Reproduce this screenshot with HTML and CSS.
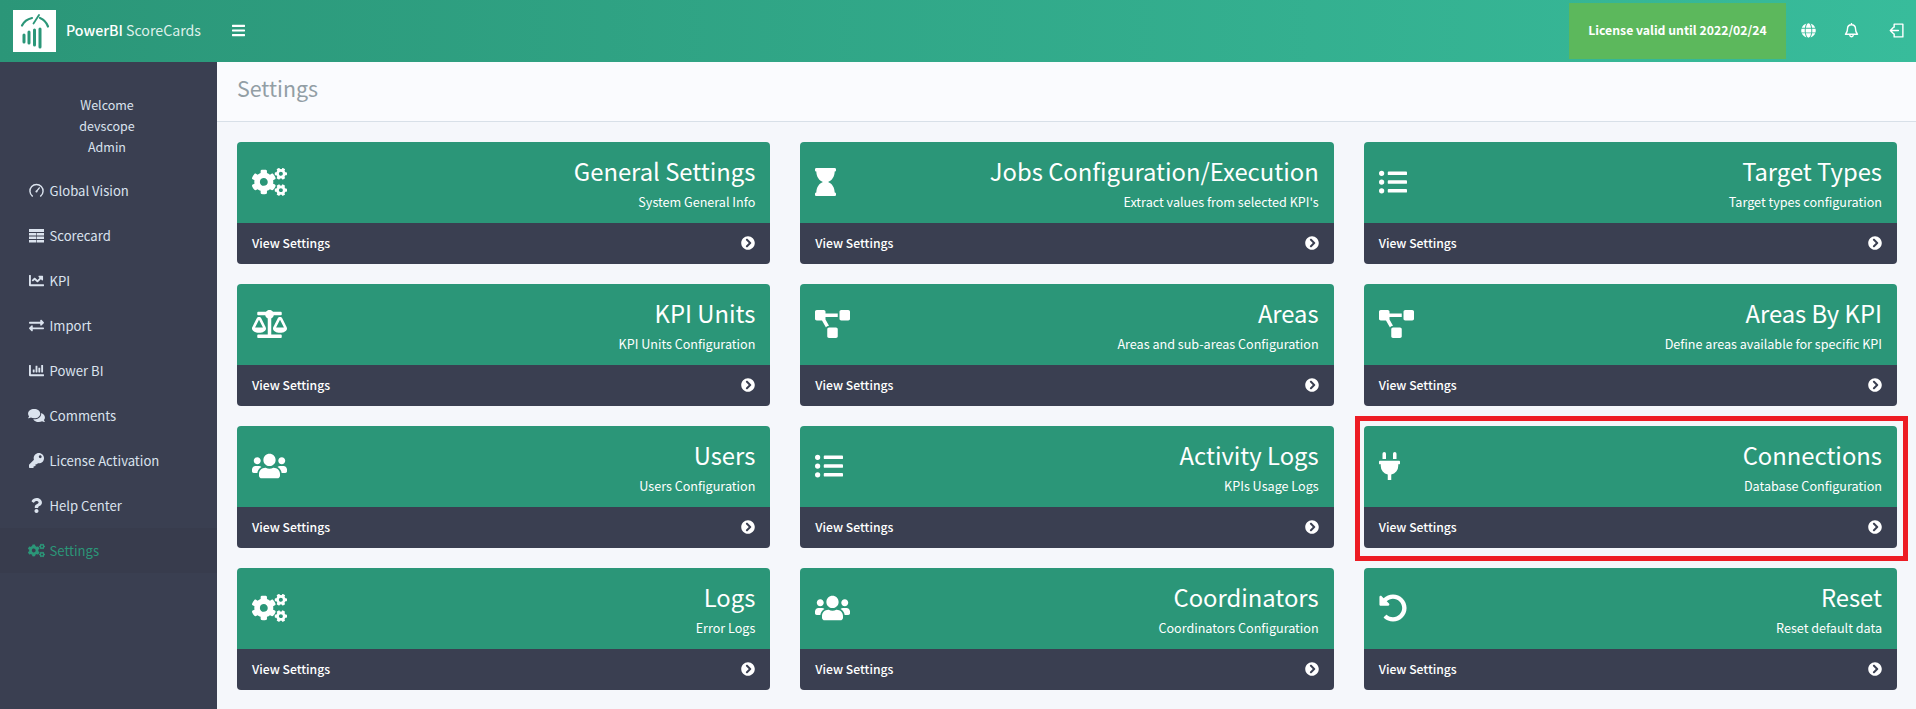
FILE: index.html
```html
<!DOCTYPE html>
<html lang="en">
<head>
<meta charset="utf-8">
<title>Settings - PowerBI ScoreCards</title>
<link rel="stylesheet" href="styles.css">
</head>
<body>
<svg class="defs" width="0" height="0" aria-hidden="true">
<defs>
<symbol id="i-cogs" viewBox="0 0 640 512"><path d="M512.1 191l-8.2 14.3c-3 5.3-9.4 7.5-15.1 5.4-11.8-4.4-22.6-10.7-32.1-18.6-4.6-3.8-5.8-10.5-2.8-15.7l8.2-14.3c-6.9-8-12.3-17.3-15.9-27.4h-16.5c-6 0-11.2-4.3-12.2-10.3-2-12-2.1-24.6 0-37.1 1-6 6.2-10.4 12.2-10.4h16.5c3.6-10.1 9-19.4 15.9-27.4l-8.2-14.3c-3-5.2-1.9-11.9 2.8-15.7 9.5-7.9 20.4-14.2 32.1-18.6 5.7-2.1 12.1.1 15.1 5.4l8.2 14.3c10.5-1.9 21.2-1.9 31.7 0L552 6.3c3-5.3 9.4-7.5 15.1-5.4 11.8 4.4 22.6 10.7 32.1 18.6 4.6 3.8 5.8 10.5 2.8 15.7l-8.2 14.3c6.9 8 12.3 17.3 15.9 27.4h16.5c6 0 11.2 4.3 12.2 10.3 2 12 2.1 24.6 0 37.1-1 6-6.2 10.4-12.2 10.4h-16.5c-3.6 10.1-9 19.4-15.9 27.4l8.2 14.3c3 5.2 1.9 11.9-2.8 15.7-9.5 7.9-20.4 14.2-32.1 18.6-5.7 2.1-12.1-.1-15.1-5.4l-8.2-14.3c-10.4 1.9-21.2 1.9-31.7 0zm-10.5-58.8c38.5 29.6 82.4-14.3 52.8-52.8-38.5-29.7-82.4 14.3-52.8 52.8zM386.3 286.1l33.7 16.8c10.1 5.8 14.5 18.1 10.5 29.1-8.9 24.2-26.4 46.4-42.6 65.8-7.4 8.9-20.2 11.1-30.3 5.3l-29.1-16.8c-16 13.7-34.6 24.6-54.9 31.7v33.6c0 11.6-8.3 21.6-19.7 23.6-24.6 4.2-50.4 4.4-75.9 0-11.5-2-20-11.9-20-23.6V418c-20.3-7.2-38.9-18-54.9-31.7L74 403c-10 5.8-22.9 3.6-30.3-5.3-16.2-19.4-33.3-41.6-42.2-65.7-4-10.9.4-23.2 10.5-29.1l33.3-16.8c-3.9-20.9-3.9-42.4 0-63.4L12 205.8c-10.1-5.8-14.6-18.1-10.5-29 8.9-24.2 26-46.4 42.2-65.8 7.4-8.9 20.2-11.1 30.3-5.3l29.1 16.8c16-13.7 34.6-24.6 54.9-31.7V57.1c0-11.5 8.2-21.5 19.6-23.5 24.6-4.2 50.5-4.4 76-.1 11.5 2 20 11.9 20 23.6v33.6c20.3 7.2 38.9 18 54.9 31.7l29.1-16.8c10-5.8 22.9-3.6 30.3 5.3 16.2 19.4 33.2 41.6 42.1 65.8 4 10.9.1 23.2-10 29.1l-33.7 16.8c3.9 21 3.9 42.5 0 63.5zm-117.6 21.1c59.2-77-28.7-164.9-105.7-105.7-59.2 77 28.7 164.9 105.7 105.7zm243.4 182.7l-8.2 14.3c-3 5.3-9.4 7.5-15.1 5.4-11.8-4.4-22.6-10.7-32.1-18.6-4.6-3.8-5.8-10.5-2.8-15.7l8.2-14.3c-6.9-8-12.3-17.3-15.9-27.4h-16.5c-6 0-11.2-4.3-12.2-10.3-2-12-2.1-24.6 0-37.1 1-6 6.2-10.4 12.2-10.4h16.5c3.6-10.1 9-19.4 15.9-27.4l-8.2-14.3c-3-5.2-1.9-11.9 2.8-15.7 9.5-7.9 20.4-14.2 32.1-18.6 5.7-2.1 12.1.1 15.1 5.4l8.2 14.3c10.5-1.9 21.2-1.9 31.7 0l8.2-14.3c3-5.3 9.4-7.5 15.1-5.4 11.8 4.4 22.6 10.7 32.1 18.6 4.6 3.8 5.8 10.5 2.8 15.7l-8.2 14.3c6.9 8 12.3 17.3 15.9 27.4h16.5c6 0 11.2 4.3 12.2 10.3 2 12 2.1 24.6 0 37.1-1 6-6.2 10.4-12.2 10.4h-16.5c-3.6 10.1-9 19.4-15.9 27.4l8.2 14.3c3 5.2 1.9 11.9-2.8 15.7-9.5 7.9-20.4 14.2-32.1 18.6-5.7 2.1-12.1-.1-15.1-5.4l-8.2-14.3c-10.4 1.9-21.2 1.9-31.7 0zM501.6 431c38.5 29.6 82.4-14.3 52.8-52.8-38.5-29.6-82.4 14.3-52.8 52.8z"/></symbol>
<symbol id="i-hourglass" viewBox="0 0 384 512"><path d="M360 64c13.255 0 24-10.745 24-24V24c0-13.255-10.745-24-24-24H24C10.745 0 0 10.745 0 24v16c0 13.255 10.745 24 24 24 0 90.965 51.016 167.734 120.842 192C75.016 280.266 24 357.035 24 448c-13.255 0-24 10.745-24 24v16c0 13.255 10.745 24 24 24h336c13.255 0 24-10.745 24-24v-16c0-13.255-10.745-24-24-24 0-90.965-51.016-167.734-120.842-192C308.984 231.734 360 154.965 360 64z"/></symbol>
<symbol id="i-list" viewBox="0 0 512 512"><path d="M48 48a48 48 0 1 0 48 48 48 48 0 0 0-48-48zm0 160a48 48 0 1 0 48 48 48 48 0 0 0-48-48zm0 160a48 48 0 1 0 48 48 48 48 0 0 0-48-48zm448 16H176a16 16 0 0 0-16 16v32a16 16 0 0 0 16 16h320a16 16 0 0 0 16-16v-32a16 16 0 0 0-16-16zm0-320H176a16 16 0 0 0-16 16v32a16 16 0 0 0 16 16h320a16 16 0 0 0 16-16V80a16 16 0 0 0-16-16zm0 160H176a16 16 0 0 0-16 16v32a16 16 0 0 0 16 16h320a16 16 0 0 0 16-16v-32a16 16 0 0 0-16-16z"/></symbol>
<symbol id="i-scale" viewBox="0 0 640 512"><path d="M256 336h-.02c0-16.18 1.34-8.73-85.05-181.51-17.65-35.29-68.19-35.36-85.87 0C-2.06 328.75.02 320.33.02 336H0c0 44.18 57.31 80 128 80s128-35.82 128-80zM128 176l72 144H56l72-144zm511.98 160c0-16.18 1.34-8.73-85.05-181.51-17.65-35.29-68.19-35.36-85.87 0-87.12 174.26-85.04 165.84-85.04 181.51H384c0 44.18 57.31 80 128 80s128-35.82 128-80h-.02zM440 320l72-144 72 144H440zm88 128H352V153.25c23.51-10.29 41.16-31.48 46.39-57.25H528c8.84 0 16-7.16 16-16V48c0-8.84-7.16-16-16-16H383.64C369.04 12.68 346.09 0 320 0s-49.04 12.68-63.64 32H112c-8.84 0-16 7.16-16 16v32c0 8.84 7.16 16 16 16h129.61c5.23 25.76 22.87 46.96 46.39 57.25V448H112c-8.84 0-16 7.16-16 16v32c0 8.84 7.16 16 16 16h416c8.84 0 16-7.16 16-16v-32c0-8.84-7.16-16-16-16z"/></symbol>
<symbol id="i-diagram" viewBox="0 0 640 512"><path d="M384 320H256c-17.67 0-32 14.33-32 32v128c0 17.67 14.33 32 32 32h128c17.67 0 32-14.33 32-32V352c0-17.67-14.33-32-32-32zM192 32c0-17.67-14.33-32-32-32H32C14.33 0 0 14.33 0 32v128c0 17.67 14.33 32 32 32h95.72l73.16 128.04C211.98 300.98 232.4 288 256 288h.28L192 175.51V128h224V64H192V32zM608 0H480c-17.67 0-32 14.33-32 32v128c0 17.67 14.33 32 32 32h128c17.67 0 32-14.33 32-32V32c0-17.67-14.33-32-32-32z"/></symbol>
<symbol id="i-users" viewBox="0 0 640 512"><path d="M96 224c35.3 0 64-28.7 64-64s-28.7-64-64-64-64 28.7-64 64 28.7 64 64 64zm448 0c35.3 0 64-28.7 64-64s-28.7-64-64-64-64 28.7-64 64 28.7 64 64 64zm32 32h-64c-17.6 0-33.5 7.1-45.1 18.6 40.3 22.1 68.9 62 75.1 109.4h66c17.7 0 32-14.3 32-32v-32c0-35.3-28.7-64-64-64zm-256 0c61.9 0 112-50.1 112-112S381.9 32 320 32 208 82.1 208 144s50.1 112 112 112zm76.8 32h-8.3c-20.8 10-43.9 16-68.5 16s-47.6-6-68.5-16h-8.3C179.6 288 128 339.6 128 403.2V432c0 26.5 21.5 48 48 48h288c26.5 0 48-21.5 48-48v-28.8c0-63.6-51.6-115.2-115.2-115.2zm-223.7-13.4C161.5 263.1 145.6 256 128 256H64c-35.3 0-64 28.7-64 64v32c0 17.7 14.3 32 32 32h65.9c6.3-47.4 34.9-87.3 75.2-109.4z"/></symbol>
<symbol id="i-plug" viewBox="0 0 384 512"><path d="M320,32a32,32,0,0,0-64,0v96h64Zm48,128H16A16,16,0,0,0,0,176v32a16,16,0,0,0,16,16H32v32A160.07,160.07,0,0,0,160,412.8V512h64V412.8A160.07,160.07,0,0,0,352,256V224h16a16,16,0,0,0,16-16V176A16,16,0,0,0,368,160ZM128,32a32,32,0,0,0-64,0v96h64Z"/></symbol>
<symbol id="i-undo" viewBox="0 0 512 512"><path d="M255.545 8c-66.269.119-126.438 26.233-170.86 68.685L48.971 40.971C33.851 25.851 8 36.559 8 57.941V192c0 13.255 10.745 24 24 24h134.059c21.382 0 32.09-25.851 16.971-40.971l-41.75-41.75c30.864-28.899 70.801-44.907 113.23-45.273 92.398-.798 170.283 73.977 169.484 169.442C423.236 348.009 349.816 424 256 424c-41.127 0-79.997-14.678-110.63-41.556-4.743-4.161-11.906-3.908-16.368.553L89.34 422.659c-4.872 4.872-4.631 12.815.482 17.433C133.798 479.813 192.074 504 256 504c136.966 0 247.999-111.033 248-247.998C504.001 119.193 392.354 7.755 255.545 8z"/></symbol>
<symbol id="i-chevron" viewBox="0 0 512 512"><path d="M256 8c137 0 248 111 248 248S393 504 256 504 8 393 8 256 119 8 256 8zm113.9 231L234.4 103.5c-9.4-9.4-24.6-9.4-33.9 0l-17 17c-9.4 9.4-9.4 24.6 0 33.9L285.1 256 183.5 357.6c-9.4 9.4-9.4 24.6 0 33.9l17 17c9.4 9.4 24.6 9.4 33.9 0L369.9 273c9.4-9.4 9.4-24.6 0-34z"/></symbol>
<symbol id="i-bars" viewBox="0 0 448 512"><path d="M16 132h416c8.837 0 16-7.163 16-16V76c0-8.837-7.163-16-16-16H16C7.163 60 0 67.163 0 76v40c0 8.837 7.163 16 16 16zm0 160h416c8.837 0 16-7.163 16-16v-40c0-8.837-7.163-16-16-16H16c-8.837 0-16 7.163-16 16v40c0 8.837 7.163 16 16 16zm0 160h416c8.837 0 16-7.163 16-16v-40c0-8.837-7.163-16-16-16H16c-8.837 0-16 7.163-16 16v40c0 8.837 7.163 16 16 16z"/></symbol>
<symbol id="i-table" viewBox="0 0 15 15"><path d="M0 1h15v3H0zM0 5h7.200v2.600H0zM7.800 5H15v2.600H7.800zM0 8.500h7.200v2.500H0zM7.800 8.500H15v2.500H7.800zM0 12h7.200v2.500H0zM7.800 12H15v2.500H7.800z"/></symbol>
<symbol id="i-line" viewBox="0 0 512 512"><path d="M496 384H64V80c0-8.84-7.16-16-16-16H16C7.16 64 0 71.16 0 80v336c0 17.67 14.33 32 32 32h464c8.84 0 16-7.16 16-16v-32c0-8.84-7.16-16-16-16zM464 96H345.94c-21.38 0-32.09 25.85-16.97 40.97l32.4 32.4L288 242.75l-73.37-73.37c-12.5-12.5-32.76-12.5-45.25 0l-68.69 68.69c-6.25 6.25-6.25 16.38 0 22.63l22.62 22.62c6.25 6.25 16.38 6.25 22.63 0L192 237.25l73.37 73.37c12.5 12.5 32.76 12.5 45.25 0l96-96 32.4 32.4c15.12 15.12 40.97 4.41 40.97-16.97V112c.01-8.84-7.15-16-15.99-16z"/></symbol>
<symbol id="i-exchange" viewBox="0 0 512 512"><path d="M0 168v-16c0-13.255 10.745-24 24-24h360V80c0-21.367 25.899-32.042 40.971-16.971l80 80c9.372 9.373 9.372 24.569 0 33.941l-80 80C409.956 271.982 384 261.456 384 240v-48H24c-13.255 0-24-10.745-24-24zm488 152H128v-48c0-21.314-25.862-32.08-40.971-16.971l-80 80c-9.372 9.373-9.372 24.569 0 33.941l80 80C102.057 463.997 128 453.437 128 432v-48h360c13.255 0 24-10.745 24-24v-16c0-13.255-10.745-24-24-24z"/></symbol>
<symbol id="i-bar" viewBox="0 0 512 512"><path d="M332.8 320h38.4c6.4 0 12.8-6.4 12.8-12.8V172.8c0-6.4-6.4-12.8-12.8-12.8h-38.4c-6.4 0-12.8 6.4-12.8 12.8v134.4c0 6.4 6.4 12.8 12.8 12.8zm96 0h38.4c6.4 0 12.8-6.4 12.8-12.8V76.8c0-6.4-6.4-12.8-12.8-12.8h-38.4c-6.4 0-12.8 6.4-12.8 12.8v230.4c0 6.4 6.4 12.8 12.8 12.8zm-288 0h38.4c6.4 0 12.8-6.4 12.8-12.8v-70.4c0-6.4-6.4-12.8-12.8-12.8h-38.4c-6.4 0-12.8 6.4-12.8 12.8v70.4c0 6.4 6.4 12.8 12.8 12.8zm96 0h38.4c6.4 0 12.8-6.4 12.8-12.8V108.8c0-6.4-6.4-12.8-12.8-12.8h-38.4c-6.4 0-12.8 6.4-12.8 12.8v198.4c0 6.4 6.4 12.8 12.8 12.8zM496 384H64V80c0-8.84-7.16-16-16-16H16C7.16 64 0 71.16 0 80v336c0 17.67 14.33 32 32 32h464c8.84 0 16-7.16 16-16v-32c0-8.84-7.16-16-16-16z"/></symbol>
<symbol id="i-comments" viewBox="0 0 576 512"><path d="M416 192c0-88.4-93.1-160-208-160S0 103.6 0 192c0 34.3 14.1 65.9 38 92-13.4 30.2-35.5 54.2-35.8 54.5-2.2 2.3-2.8 5.7-1.5 8.7S4.8 352 8 352c36.6 0 66.9-12.3 88.7-25 32.2 15.7 70.3 25 111.3 25 114.9 0 208-71.6 208-160zm122 220c23.9-26 38-57.7 38-92 0-66.9-53.5-124.2-129.3-148.1.9 6.6 1.3 13.3 1.3 20.1 0 105.9-107.7 192-240 192-10.8 0-21.3-.8-31.7-1.9C207.8 439.6 281.8 480 368 480c41 0 79.1-9.2 111.3-25 21.8 12.7 52.1 25 88.7 25 3.2 0 6.1-1.9 7.3-4.8 1.3-2.9.7-6.3-1.5-8.7-.3-.3-22.4-24.2-35.8-54.5z"/></symbol>
<symbol id="i-key" viewBox="0 0 512 512"><path d="M512 176.001C512 273.203 433.202 352 336 352c-11.22 0-22.19-1.062-32.827-3.069l-24.012 27.014A23.999 23.999 0 0 1 261.223 384H224v40c0 13.255-10.745 24-24 24h-40v40c0 13.255-10.745 24-24 24H24c-13.255 0-24-10.745-24-24v-78.059c0-6.365 2.529-12.47 7.029-16.971l161.802-161.802C163.108 213.814 160 195.271 160 176 160 78.798 238.797.001 335.999 0 433.488-.001 512 78.511 512 176.001zM336 128c0 26.51 21.49 48 48 48s48-21.49 48-48-21.49-48-48-48-48 21.49-48 48z"/></symbol>
<symbol id="i-question" viewBox="0 0 384 512"><path d="M202.021 0C122.202 0 70.503 32.703 29.914 91.026c-7.363 10.58-5.093 25.086 5.178 32.874l43.138 32.709c10.373 7.865 25.132 6.026 33.253-4.148 25.049-31.381 43.63-49.449 82.757-49.449 30.764 0 68.816 19.799 68.816 49.631 0 22.552-18.617 34.134-48.993 51.164-35.423 19.86-82.299 44.576-82.299 106.405V320c0 13.255 10.745 24 24 24h72.471c13.255 0 24-10.745 24-24v-5.773c0-42.86 125.268-44.645 125.268-160.627C377.504 66.256 286.902 0 202.021 0zM192 373.459c-38.196 0-69.271 31.075-69.271 69.271 0 38.195 31.075 69.27 69.271 69.27s69.271-31.075 69.271-69.271-31.075-69.27-69.271-69.27z"/></symbol>
<symbol id="i-globe" viewBox="0 0 496 512"><path d="M336.5 160C322 70.7 287.8 8 248 8s-74 62.7-88.5 152h177zM152 256c0 22.2 1.2 43.5 3.3 64h185.3c2.1-20.5 3.3-41.8 3.3-64s-1.2-43.5-3.3-64H155.3c-2.1 20.5-3.3 41.8-3.3 64zm324.7-96c-28.6-67.9-86.5-120.4-158-141.6 24.4 33.8 41.2 84.7 50 141.6h108zM177.2 18.4C105.8 39.6 47.8 92.1 19.3 160h108c8.7-56.9 25.5-107.8 49.9-141.6zM487.4 192H372.7c2.1 21 3.3 42.5 3.3 64s-1.2 43-3.3 64h114.6c5.5-20.5 8.6-41.8 8.6-64s-3.1-43.5-8.5-64zM120 256c0-21.5 1.2-43 3.3-64H8.6C3.2 212.5 0 233.8 0 256s3.2 43.5 8.6 64h114.6c-2-21-3.2-42.5-3.2-64zm39.5 96c14.5 89.3 48.7 152 88.5 152s74-62.7 88.5-152h-177zm159.3 141.6c71.4-21.2 129.4-73.7 158-141.6h-108c-8.8 56.9-25.6 107.8-50 141.6zM19.3 352c28.6 67.9 86.5 120.4 158 141.6-24.4-33.8-41.2-84.7-50-141.6h-108z"/></symbol>
<symbol id="i-gauge" viewBox="0 0 16 16"><path class="line" d="M3.600 14A7 7 0 1 1 12.400 14M8 9 11 5.200"/><circle cx="8" cy="9" r="1.100"/></symbol>
<symbol id="i-bell" viewBox="0 0 16 16"><path class="line" d="M8 1.800C5.200 1.800 3.700 3.800 3.700 6.400c0 3.600-1.900 4.700-2.100 5.600h12.800c-.2-.9-2.100-2-2.100-5.600 0-2.600-1.500-4.600-4.300-4.600ZM8 .6v1.200M6.200 13.400a1.900 1.900 0 0 0 3.600 0"/></symbol>
<symbol id="i-exit" viewBox="0 0 16 16"><path class="line" d="M5.500 4.400V1.200h9.300v13.600H5.500v-3.200M10 8H1.600M4.600 4.800 1.400 8l3.200 3.200"/></symbol>
<symbol id="i-logo" viewBox="0 0 43 42"><g class="logo"><path d="M9 15.500C11 11.500 14.500 9 19 8M27 8c3.800 1.500 6.500 4.500 8 8.500"/><path class="logo-needle" d="M26 5 20.500 13.500"/><path class="logo-bar" d="M11 25v7M16 22v11M21.500 20v15M27 19v18"/></g></symbol>
</defs>
</svg>

<header class="topbar">
  <a class="brand" href="#">
    <span class="brand-logo"><svg class="logo-svg"><use href="#i-logo"/></svg></span>
    <span class="brand-name"><strong>PowerBI</strong> ScoreCards</span>
  </a>
  <svg class="bars"><use href="#i-bars"/></svg>
  <div class="topbar-right">
    <div class="license">License valid until 2022/02/24</div>
    <svg class="top-icon"><use href="#i-globe"/></svg>
    <svg class="top-icon top-icon-bell"><use href="#i-bell"/></svg>
    <svg class="top-icon top-icon-exit"><use href="#i-exit"/></svg>
  </div>
</header>

<div class="layout">
  <aside class="sidebar">
    <div class="welcome">
      <div>Welcome</div>
      <div>devscope</div>
      <div>Admin</div>
    </div>
    <nav class="nav">
      <a class="nav-item" href="#"><span class="nav-icon"><svg class="nav-svg"><use href="#i-gauge"/></svg></span>Global Vision</a>
      <a class="nav-item" href="#"><span class="nav-icon"><svg class="nav-svg"><use href="#i-table"/></svg></span>Scorecard</a>
      <a class="nav-item" href="#"><span class="nav-icon"><svg class="nav-svg"><use href="#i-line"/></svg></span>KPI</a>
      <a class="nav-item" href="#"><span class="nav-icon"><svg class="nav-svg"><use href="#i-exchange"/></svg></span>Import</a>
      <a class="nav-item" href="#"><span class="nav-icon"><svg class="nav-svg"><use href="#i-bar"/></svg></span>Power BI</a>
      <a class="nav-item" href="#"><span class="nav-icon"><svg class="nav-svg nav-svg-wide"><use href="#i-comments"/></svg></span>Comments</a>
      <a class="nav-item" href="#"><span class="nav-icon"><svg class="nav-svg"><use href="#i-key"/></svg></span>License Activation</a>
      <a class="nav-item" href="#"><span class="nav-icon"><svg class="nav-svg"><use href="#i-question"/></svg></span>Help Center</a>
      <a class="nav-item nav-item-active" href="#"><span class="nav-icon"><svg class="nav-svg nav-svg-wide"><use href="#i-cogs"/></svg></span>Settings</a>
    </nav>
  </aside>

  <main class="main">
    <div class="page-head"><h1 class="page-title">Settings</h1></div>
    <section class="grid">
      <article class="card">
        <div class="card-head"><svg class="card-icon icon-wide"><use href="#i-cogs"/></svg><div class="card-text"><div class="card-title">General Settings</div><div class="card-sub">System General Info</div></div></div>
        <a class="card-foot" href="#"><span>View Settings</span><svg class="chev"><use href="#i-chevron"/></svg></a>
      </article>
      <article class="card">
        <div class="card-head"><svg class="card-icon icon-narrow"><use href="#i-hourglass"/></svg><div class="card-text"><div class="card-title">Jobs Configuration/Execution</div><div class="card-sub">Extract values from selected KPI's</div></div></div>
        <a class="card-foot" href="#"><span>View Settings</span><svg class="chev"><use href="#i-chevron"/></svg></a>
      </article>
      <article class="card">
        <div class="card-head"><svg class="card-icon icon-square"><use href="#i-list"/></svg><div class="card-text"><div class="card-title">Target Types</div><div class="card-sub">Target types configuration</div></div></div>
        <a class="card-foot" href="#"><span>View Settings</span><svg class="chev"><use href="#i-chevron"/></svg></a>
      </article>
      <article class="card">
        <div class="card-head"><svg class="card-icon icon-wide"><use href="#i-scale"/></svg><div class="card-text"><div class="card-title">KPI Units</div><div class="card-sub">KPI Units Configuration</div></div></div>
        <a class="card-foot" href="#"><span>View Settings</span><svg class="chev"><use href="#i-chevron"/></svg></a>
      </article>
      <article class="card">
        <div class="card-head"><svg class="card-icon icon-wide"><use href="#i-diagram"/></svg><div class="card-text"><div class="card-title">Areas</div><div class="card-sub">Areas and sub-areas Configuration</div></div></div>
        <a class="card-foot" href="#"><span>View Settings</span><svg class="chev"><use href="#i-chevron"/></svg></a>
      </article>
      <article class="card">
        <div class="card-head"><svg class="card-icon icon-wide"><use href="#i-diagram"/></svg><div class="card-text"><div class="card-title">Areas By KPI</div><div class="card-sub">Define areas available for specific KPI</div></div></div>
        <a class="card-foot" href="#"><span>View Settings</span><svg class="chev"><use href="#i-chevron"/></svg></a>
      </article>
      <article class="card">
        <div class="card-head"><svg class="card-icon icon-wide"><use href="#i-users"/></svg><div class="card-text"><div class="card-title">Users</div><div class="card-sub">Users Configuration</div></div></div>
        <a class="card-foot" href="#"><span>View Settings</span><svg class="chev"><use href="#i-chevron"/></svg></a>
      </article>
      <article class="card">
        <div class="card-head"><svg class="card-icon icon-square"><use href="#i-list"/></svg><div class="card-text"><div class="card-title">Activity Logs</div><div class="card-sub">KPIs Usage Logs</div></div></div>
        <a class="card-foot" href="#"><span>View Settings</span><svg class="chev"><use href="#i-chevron"/></svg></a>
      </article>
      <article class="card card-marked">
        <div class="card-head"><svg class="card-icon icon-narrow"><use href="#i-plug"/></svg><div class="card-text"><div class="card-title">Connections</div><div class="card-sub">Database Configuration</div></div></div>
        <a class="card-foot" href="#"><span>View Settings</span><svg class="chev"><use href="#i-chevron"/></svg></a>
      </article>
      <article class="card">
        <div class="card-head"><svg class="card-icon icon-wide"><use href="#i-cogs"/></svg><div class="card-text"><div class="card-title">Logs</div><div class="card-sub">Error Logs</div></div></div>
        <a class="card-foot" href="#"><span>View Settings</span><svg class="chev"><use href="#i-chevron"/></svg></a>
      </article>
      <article class="card">
        <div class="card-head"><svg class="card-icon icon-wide"><use href="#i-users"/></svg><div class="card-text"><div class="card-title">Coordinators</div><div class="card-sub">Coordinators Configuration</div></div></div>
        <a class="card-foot" href="#"><span>View Settings</span><svg class="chev"><use href="#i-chevron"/></svg></a>
      </article>
      <article class="card">
        <div class="card-head"><svg class="card-icon icon-square"><use href="#i-undo"/></svg><div class="card-text"><div class="card-title">Reset</div><div class="card-sub">Reset default data</div></div></div>
        <a class="card-foot" href="#"><span>View Settings</span><svg class="chev"><use href="#i-chevron"/></svg></a>
      </article>
    </section>
  </main>
</div>
</body>
</html>
```
FILE: styles.css
```css
* { box-sizing: border-box; }
html, body { height: 100%; }
body {
  margin: 0;
  overflow: hidden;
  background: #f5f7fb;
  color: #fff;
  font-family: "Noto Sans CJK SC", "Noto Sans", sans-serif;
  font-size: 12.500px;
  line-height: 21px;
}
a { color: inherit; text-decoration: none; }
svg { fill: currentColor; display: block; flex: none; }
.defs { position: absolute; }
.line { fill: none; stroke: currentColor; stroke-width: 1.500; stroke-linecap: round; stroke-linejoin: round; }

.topbar {
  height: 62px;
  display: flex;
  align-items: center;
  padding-left: 13px;
  background: linear-gradient(90deg, #2b9678, #38bc9b);
}
.brand { display: flex; align-items: center; gap: 10px; width: 219px; }
.brand-logo { width: 43px; height: 42px; background: #fff; }
.logo-svg { width: 43px; height: 42px; }
.logo { fill: none; stroke: #2b9678; stroke-width: 2.200; stroke-linecap: round; }
.logo-needle { stroke-width: 1.800; }
.logo-bar { stroke-width: 3; stroke-linecap: round; }
.brand-name { font-size: 14.200px; color: #dff0ea; margin-top: -1px; }
.brand-name strong { font-weight: 500; color: #fff; }
.bars { width: 13px; height: 15px; margin-top: -1px; }
.topbar-right { margin-left: auto; display: flex; align-items: center; }
.license {
  width: 217px;
  height: 56px;
  margin-right: 15px;
  padding-bottom: 2px;
  display: flex;
  align-items: center;
  justify-content: center;
  background: #5cb85c;
  font-size: 12.250px;
  font-weight: 700;
}
.top-icon { width: 15px; height: 15px; margin-right: 28px; margin-bottom: 2px; }
.top-icon-bell { margin-right: 30px; }
.top-icon-exit { margin-right: 12px; }

.layout { display: flex; height: calc(100% - 62px); }
.sidebar { width: 217px; flex: none; background: #3a3f51; color: #dbe3ee; padding-top: 32px; }
.welcome { text-align: center; margin-bottom: 11px; padding-right: 3px; }
.nav-item { display: flex; align-items: center; height: 45px; padding-left: 28px; font-size: 13.100px; }
.nav-item-active { background: #383c4d; color: #2b9678; }
.nav-icon { width: 17px; margin-right: 4.500px; display: flex; justify-content: center; }
.nav-svg { width: 15px; height: 15px; }
.nav-svg-wide { width: 17px; }

.main { flex: 1; min-width: 0; }
.page-head {
  height: 60px;
  padding: 0 0 8px 20px;
  display: flex;
  align-items: center;
  background: #fafbfe;
  border-bottom: 1px solid #d8e0e8;
}
.page-title { margin: 0; font-size: 21.400px; line-height: 36px; font-weight: 400; color: #929ea5; }

.grid {
  display: grid;
  grid-template-columns: repeat(3, 1fr);
  gap: 20px 30px;
  padding: 20px 19px 0 20px;
}
.card { position: relative; height: 122px; }
.card-marked::after {
  content: "";
  position: absolute;
  inset: -10px -11px -13px -9px;
  border: 5px solid #ed1c24;
}
.card-head {
  height: 81px;
  padding: 0 15px;
  display: flex;
  align-items: center;
  justify-content: space-between;
  background: #2b9678;
  border-radius: 4px 4px 0 0;
}
.card-icon { height: 28px; margin-bottom: 2px; }
.icon-wide { width: 35px; }
.icon-narrow { width: 21px; }
.icon-square { width: 28px; }
.card-text { text-align: right; padding-bottom: 1px; }
.card-title { font-size: 23.800px; line-height: 36px; margin-bottom: 2px; }
.card-sub { font-size: 12.600px; line-height: 21px; }
.card-foot {
  height: 41px;
  padding: 0 15px;
  display: flex;
  align-items: center;
  justify-content: space-between;
  background: #3a3f51;
  border-radius: 0 0 4px 4px;
  font-size: 12.200px;
  font-weight: 500;
}
.chev { width: 14px; height: 14px; margin-bottom: 1px; }
```
